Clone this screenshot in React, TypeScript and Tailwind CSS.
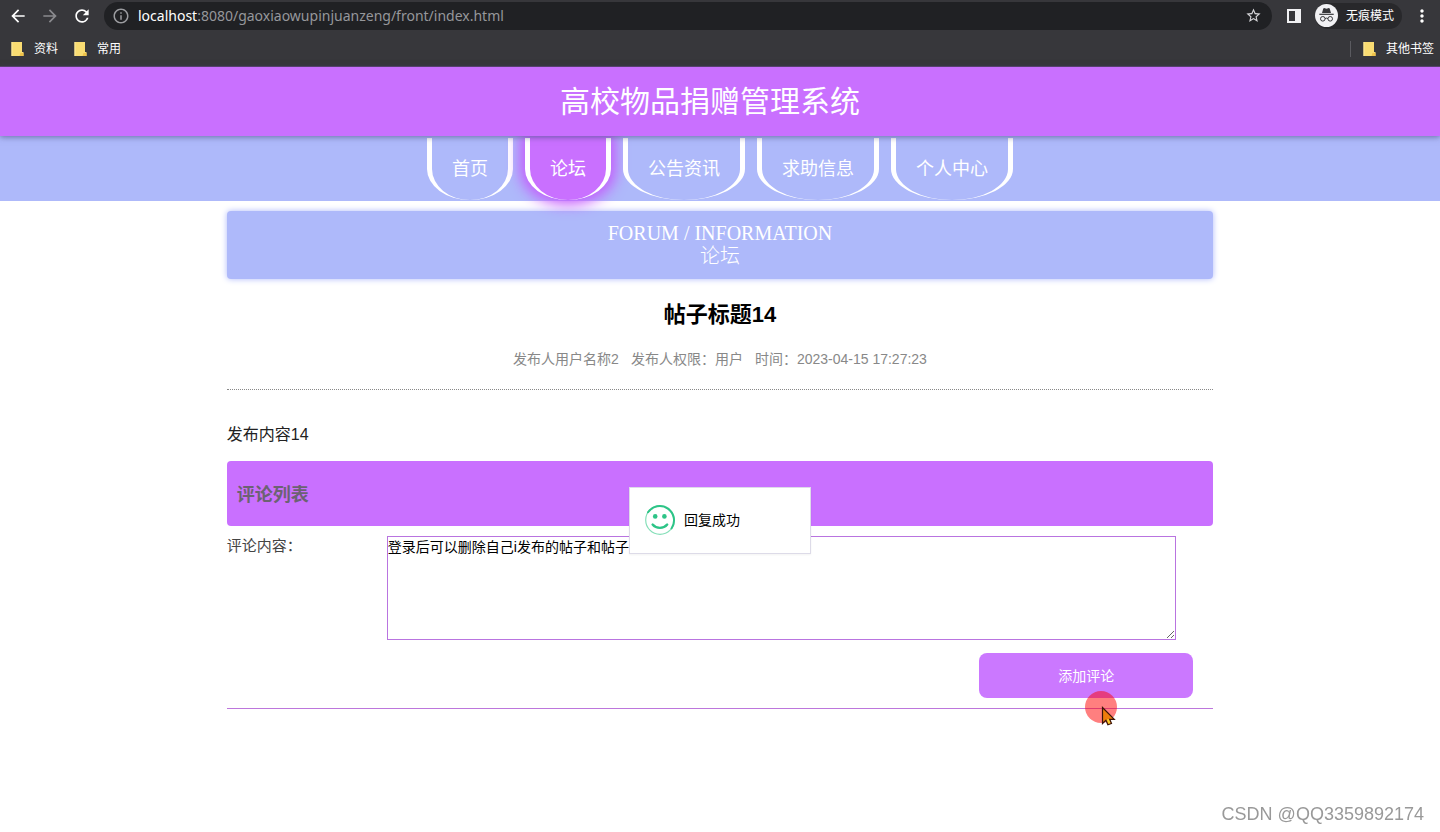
import React, { useState } from 'react'
import clsx from 'clsx'
import { MdArrowBack, MdArrowForward, MdInfoOutline, MdMoreVert, MdRefresh, MdStarBorder } from 'react-icons/md'

const NAV_ITEMS = ['首页', '论坛', '公告资讯', '求助信息', '个人中心']

const FolderIcon: React.FC = () => (
    <svg width="13" height="16" viewBox="0 0 13 16" aria-hidden="true">
        <path d="M0.5 1h10.5v10h1.5v4H0.5z" fill="#f9dc72" />
        <path d="M9.5 12h3v3h-4z" fill="#efc24a" />
        <path d="M0.5 1h1v14h-1z" fill="#fbe89b" />
    </svg>
)

const SidePanelIcon: React.FC = () => (
    <svg width="14" height="14" viewBox="0 0 14 14" aria-hidden="true">
        <path fillRule="evenodd" d="M0 0h14v14H0zM2 2v10h6V2z" fill="#f1f1f3" />
    </svg>
)

const IncognitoIcon: React.FC = () => (
    <svg width="23" height="23" viewBox="0 0 23 23" aria-hidden="true">
        <circle cx="11.5" cy="11.5" r="11.5" fill="#f1f1f4" />
        <path d="M8.3 4.6l0.8-0.5 2.4 0.6 2.4-0.6 0.8 0.5 1.3 4.4h-9z" fill="#36363a" />
        <path d="M4.3 10.3h14.4" stroke="#36363a" strokeWidth="1.2" />
        <g fill="none" stroke="#36363a" strokeWidth="1">
            <circle cx="7.8" cy="14.8" r="2.3" />
            <circle cx="15.2" cy="14.8" r="2.3" />
            <path d="M10.1 14.6q1.4-1 2.8 0" />
        </g>
    </svg>
)

const SmileIcon: React.FC = () => (
    <svg width="32" height="32" viewBox="0 0 32 32" fill="none" aria-hidden="true">
        <circle cx="16" cy="16" r="14.3" stroke="#35c98a" strokeWidth="1.2" opacity="0.6" />
        <path d="M4 8.2A14.3 14.3 0 0 1 27.5 24.5" stroke="#2dc487" strokeWidth="2" strokeLinecap="round" />
        <circle cx="11.2" cy="12.4" r="2.3" fill="#2dc487" />
        <circle cx="20.4" cy="12.4" r="2.3" fill="#2dc487" />
        <path d="M8.6 20.6c3.6 4.4 11 4.4 14.6 0" stroke="#2dc487" strokeWidth="2.4" strokeLinecap="round" />
    </svg>
)

const Pointer: React.FC = () => (
    <svg width="34" height="36" viewBox="0 0 34 36" aria-hidden="true">
        <circle cx="16" cy="17" r="16" fill="#ff0000" fillOpacity="0.5" />
        <path
            d="M17.5 17.5v16l3.4-3.2 2 4.4 3.6-1.2-1.8-4.2h4.6z"
            fill="#ee7d0c"
            stroke="#3b1408"
            strokeWidth="1.2"
        />
        <path d="M21.8 29.6l1.8 4.2 1.8-0.7-1.8-4z" fill="#f5d02a" />
    </svg>
)

// 浏览器顶部工具栏
const BrowserBar: React.FC = () => (
    <div className="flex h-[67px] flex-col border-b border-[#5d4470] bg-[#37373b] font-['Noto_Sans','Noto_Sans_CJK_SC',sans-serif] text-white">
        <div className="flex h-[31px] items-center pr-2">
            <div className="flex items-center gap-3 pl-2">
                <button type="button" aria-label="后退"><MdArrowBack size={20} /></button>
                <button type="button" aria-label="前进" className="text-[#8a8a8e]"><MdArrowForward size={20} /></button>
                <button type="button" aria-label="刷新"><MdRefresh size={20} /></button>
            </div>
            <div className="ml-3 flex h-[28px] flex-1 items-center rounded-full bg-[#202124] pr-2.5 pl-2">
                <MdInfoOutline size={18} className="text-[#9b9ca0]" />
                <span className="ml-2 flex-1 text-sm text-[#96979b]">
                    <span className="text-white">localhost</span>:8080/gaoxiaowupinjuanzeng/front/index.html
                </span>
                <button type="button" aria-label="收藏"><MdStarBorder size={17} className="text-[#d5d5d8]" /></button>
            </div>
            <button type="button" aria-label="侧边栏" className="ml-[15px]"><SidePanelIcon /></button>
            <div className="ml-3.5 flex h-[26px] items-center gap-2 rounded-full bg-[#28282b] pr-2 text-xs">
                <IncognitoIcon />
                <span>无痕模式</span>
            </div>
            <button type="button" aria-label="更多" className="ml-2.5"><MdMoreVert size={20} /></button>
        </div>
        <div className="flex h-[35px] items-center pr-1.5 pl-[11px] text-xs">
            <a href="#docs" className="flex items-center gap-2.5"><FolderIcon />资料</a>
            <a href="#common" className="ml-4 flex items-center gap-2.5"><FolderIcon />常用</a>
            <a href="#other" className="ml-auto flex items-center gap-2.5 border-l border-[#5b5b60] pl-3"><FolderIcon />其他书签</a>
        </div>
    </div>
)

const SiteNav: React.FC = () => {
    const [active, setActive] = useState('论坛')

    return (
        <nav className="flex h-[65px] justify-center gap-3 bg-[#aeb9fa] pt-0.5">
            {NAV_ITEMS.map((item) => (
                <a
                    key={item}
                    href="#nav"
                    onClick={() => setActive(item)}
                    className={clsx(
                        'h-[62px] rounded-b-[50%] border-x-[5px] border-white px-5 text-lg leading-[62px] text-white',
                        active === item && 'bg-[#c970ff] shadow-[0_0_14px_5px_#c45cfc]'
                    )}
                >
                    {item}
                </a>
            ))}
        </nav>
    )
}

const ReplyToast: React.FC = () => (
    <div
        role="status"
        className="absolute top-[26px] left-1/2 flex h-[67px] w-[182px] -translate-x-1/2 items-center gap-2 border border-[#dddbe8] bg-white pb-0.5 pl-3.5 text-sm text-black shadow-xs"
    >
        <SmileIcon />
        回复成功
    </div>
)

export default function App() {
    const [comment, setComment] = useState('登录后可以删除自己i发布的帖子和帖子')

    return (
        <div className="min-h-screen bg-white font-['Liberation_Sans','Noto_Sans_CJK_SC',sans-serif]">
            <BrowserBar />
            <header className="relative z-10 bg-[#c970ff] pr-5 text-center shadow-[0_1px_6px_rgba(60,60,110,0.6)]">
                <h1 className="text-[30px] leading-[69px] text-white">高校物品捐赠管理系统</h1>
            </header>
            <SiteNav />

            <main className="mx-auto mt-2.5 w-[68.5%]">
                <div className="rounded bg-[#aeb9fa] py-[11px] text-center font-['Liberation_Serif','Noto_Sans_CJK_SC',serif] text-xl leading-[23px] text-white shadow-[0_0_6px_#aeb9fa]">
                    <p>FORUM / INFORMATION</p>
                    <p className="font-light">论坛</p>
                </div>

                <article>
                    <h2 className="mt-5 text-center text-[22px] leading-8 font-bold text-black">帖子标题14</h2>
                    <div className="mt-[18px] flex justify-center gap-3 border-b border-dotted border-[#888888] pb-5 text-sm leading-5 text-[#888888]">
                        <span>发布人用户名称2</span>
                        <span>发布人权限：用户</span>
                        <span>时间：2023-04-15 17:27:23</span>
                    </div>
                    <p className="mt-[33px] text-base leading-6 text-[#222222]">发布内容14</p>
                </article>

                {/* 评论区 */}
                <section className="relative mt-3.5 border-b border-[#bd76dc] pb-2.5">
                    <h3 className="rounded bg-[#c970ff] pt-[3px] pl-2.5 text-lg leading-[62px] font-bold text-[#6c6272]">评论列表</h3>
                    <form className="mt-2.5" onSubmit={(e) => e.preventDefault()}>
                        <div className="flex">
                            <label htmlFor="comment" className="w-40 shrink-0 text-[15px] leading-5 text-[#444444]">评论内容：</label>
                            <textarea
                                id="comment"
                                value={comment}
                                onChange={(e) => setComment(e.target.value)}
                                className="h-[104px] w-4/5 border border-[#b974e0] text-sm text-black outline-none"
                            />
                            <div className="w-9 shrink-0" />
                        </div>
                        <div className="mt-[13px] flex justify-end pr-5">
                            <button type="submit" className="relative h-[45px] w-[214px] rounded-lg bg-[#cb78ff] text-sm text-white">
                                添加评论
                                <span className="pointer-events-none absolute top-[37px] left-[106px]"><Pointer /></span>
                            </button>
                        </div>
                    </form>
                    <ReplyToast />
                </section>
            </main>

            <p className="fixed right-4 bottom-1.5 text-lg leading-6 text-[#999999]">CSDN @QQ3359892174</p>
        </div>
    )
}
